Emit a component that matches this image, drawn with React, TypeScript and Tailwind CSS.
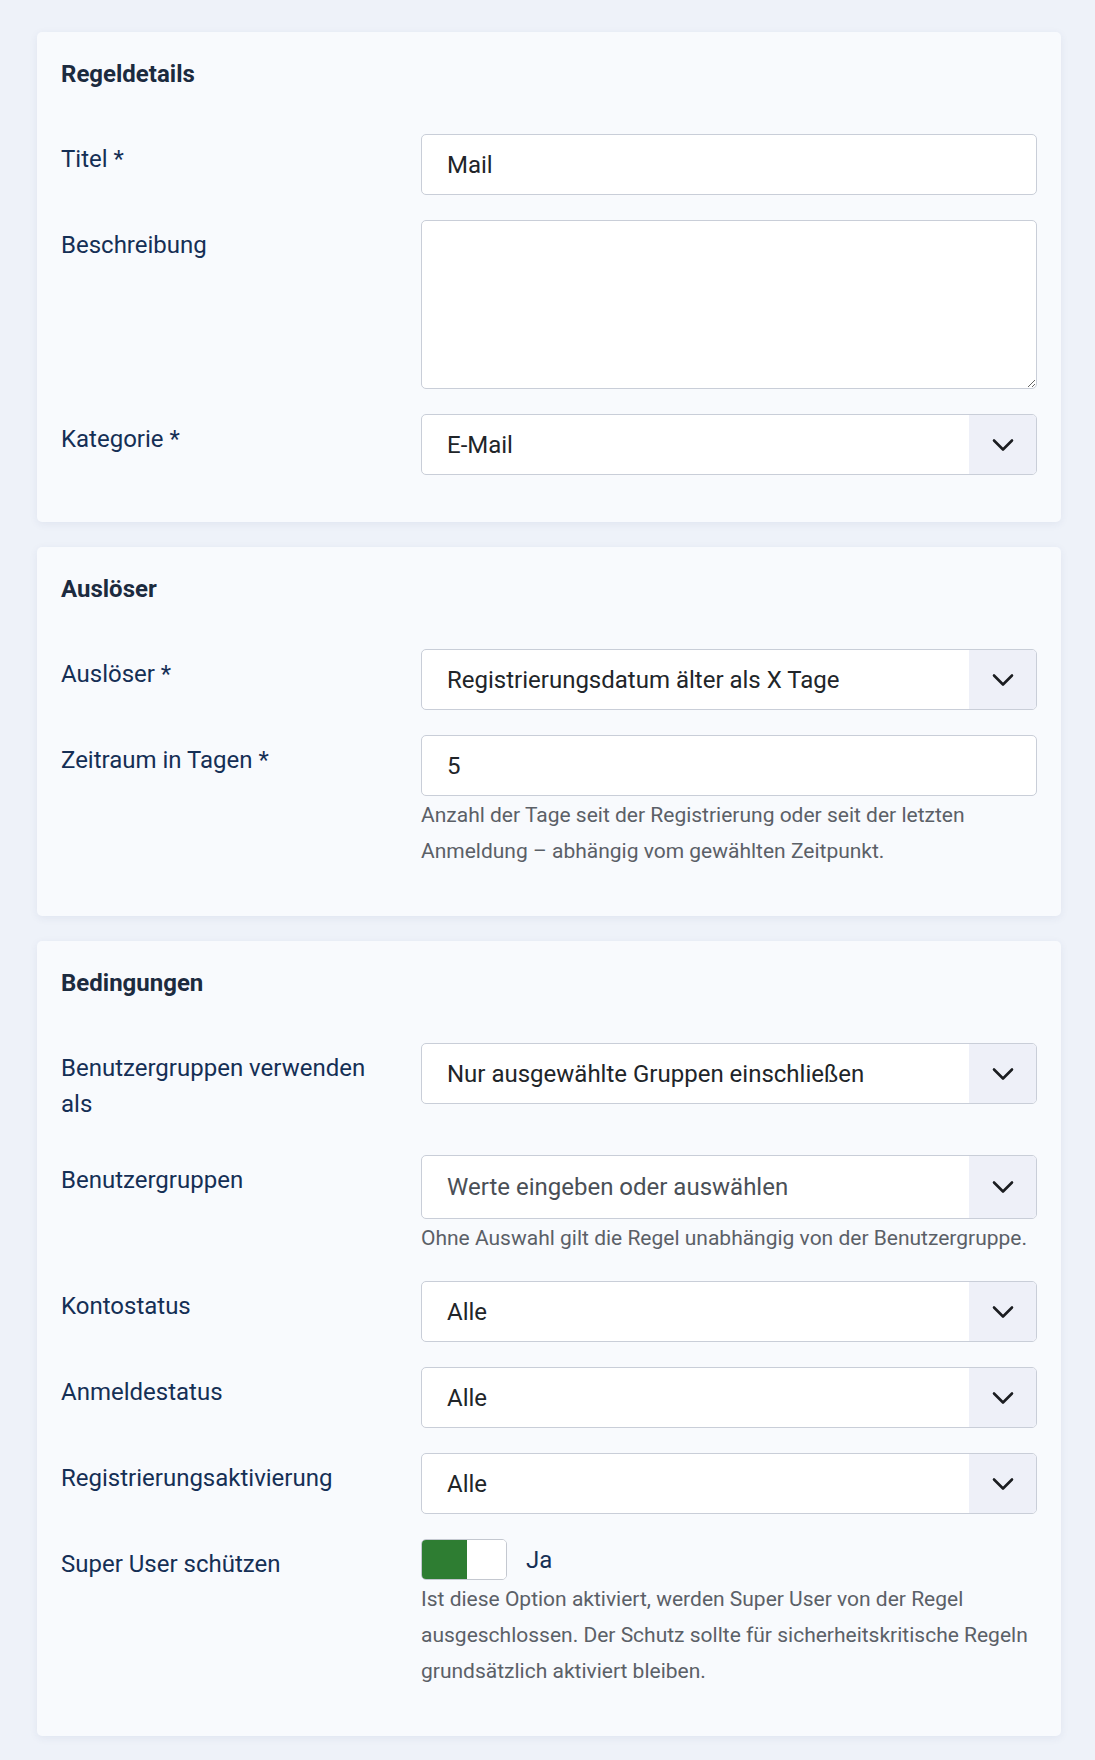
import React from "react";

const Chevron = () => (
  <svg width="22" height="14" viewBox="0 0 22 14" fill="none">
    <path d="M2 2.5L11 11.5L20 2.5" stroke="#1b1d21" strokeWidth="2.6" strokeLinecap="round" strokeLinejoin="round" />
  </svg>
);

const Label = ({ children }: { children: React.ReactNode }) => (
  <div className="w-[360px] shrink-0 pr-[24px] pt-[6.5px] pb-[8.5px] text-[24px] leading-[36px] text-[#152f55]">
    {children}
  </div>
);

const Help = ({ children }: { children: React.ReactNode }) => (
  <p className="mt-[1px] text-[21px] leading-[36px] text-[#5b6067]">{children}</p>
);

const Row = ({ label, children }: { label: React.ReactNode; children: React.ReactNode }) => (
  <div className="flex mb-[25px]">
    <Label>{label}</Label>
    <div className="flex-1 min-w-0">{children}</div>
  </div>
);

const TextInput = ({ value }: { value: string }) => (
  <input
    readOnly
    value={value}
    className="block w-full h-[61px] rounded-[5px] border border-[#c9ced8] bg-white px-[25px] text-[24px] text-[#212529] outline-none"
  />
);

const Select = ({ value, muted, tall }: { value: string; muted?: boolean; tall?: boolean }) => (
  <div
    className={`flex w-full rounded-[5px] border border-[#c9ced8] bg-white overflow-hidden ${tall ? "h-[64px]" : "h-[61px]"}`}
  >
    <div className={`flex-1 flex items-center px-[25px] text-[24px] ${muted ? "text-[#4a4f56]" : "text-[#212529]"}`}>
      {value}
    </div>
    <div className="w-[67px] flex items-center justify-center bg-[#eef0f8]">
      <Chevron />
    </div>
  </div>
);

const Card = ({ title, children }: { title: string; children: React.ReactNode }) => (
  <section className="rounded-[5px] bg-[#f8fafd] shadow-[0_2px_8px_rgba(40,60,110,0.07)] px-[24px] pt-[24px] pb-[22px]">
    <h2 className="mb-[42px] text-[24px] font-bold leading-[36px] text-[#1c2b3f]">{title}</h2>
    {children}
  </section>
);

export default function App() {
  return (
    <div
      className="min-h-screen bg-[#eef2f9] pl-[37px] pr-[34px] pt-[32px] pb-[25px] flex flex-col gap-[25px]"
      style={{ fontFamily: "Roboto, 'Liberation Sans', sans-serif" }}
    >
      <Card title="Regeldetails">
        <Row label="Titel *">
          <TextInput value="Mail" />
        </Row>
        <Row label="Beschreibung">
          <textarea
            readOnly
            className="block w-full h-[169px] rounded-[5px] border border-[#c9ced8] bg-white px-[25px] py-[13px] text-[24px] outline-none resize-y"
          />
        </Row>
        <Row label="Kategorie *">
          <Select value="E-Mail" />
        </Row>
      </Card>

      <Card title="Auslöser">
        <Row label="Auslöser *">
          <Select value="Registrierungsdatum älter als X Tage" />
        </Row>
        <Row label="Zeitraum in Tagen *">
          <TextInput value="5" />
          <Help>
            Anzahl der Tage seit der Registrierung oder seit der letzten Anmeldung – abhängig vom gewählten Zeitpunkt.
          </Help>
        </Row>
      </Card>

      <Card title="Bedingungen">
        <Row label="Benutzergruppen verwenden als">
          <Select value="Nur ausgewählte Gruppen einschließen" />
        </Row>
        <Row label="Benutzergruppen">
          <Select value="Werte eingeben oder auswählen" muted tall />
          <Help>Ohne Auswahl gilt die Regel unabhängig von der Benutzergruppe.</Help>
        </Row>
        <Row label="Kontostatus">
          <Select value="Alle" />
        </Row>
        <Row label="Anmeldestatus">
          <Select value="Alle" />
        </Row>
        <Row label="Registrierungsaktivierung">
          <Select value="Alle" />
        </Row>
        <Row label="Super User schützen">
          <div className="flex items-center">
            <div className="flex w-[86px] h-[41px] rounded-[5px] border border-[#c4c8d0] overflow-hidden">
              <div className="w-[45px] bg-[#2e7d32]" />
              <div className="flex-1 bg-white" />
            </div>
            <span className="ml-[19px] text-[24px] leading-[36px] text-[#152f55]">Ja</span>
          </div>
          <Help>
            Ist diese Option aktiviert, werden Super User von der Regel ausgeschlossen. Der Schutz sollte für
            sicherheitskritische Regeln grundsätzlich aktiviert bleiben.
          </Help>
        </Row>
      </Card>
    </div>
  );
}
